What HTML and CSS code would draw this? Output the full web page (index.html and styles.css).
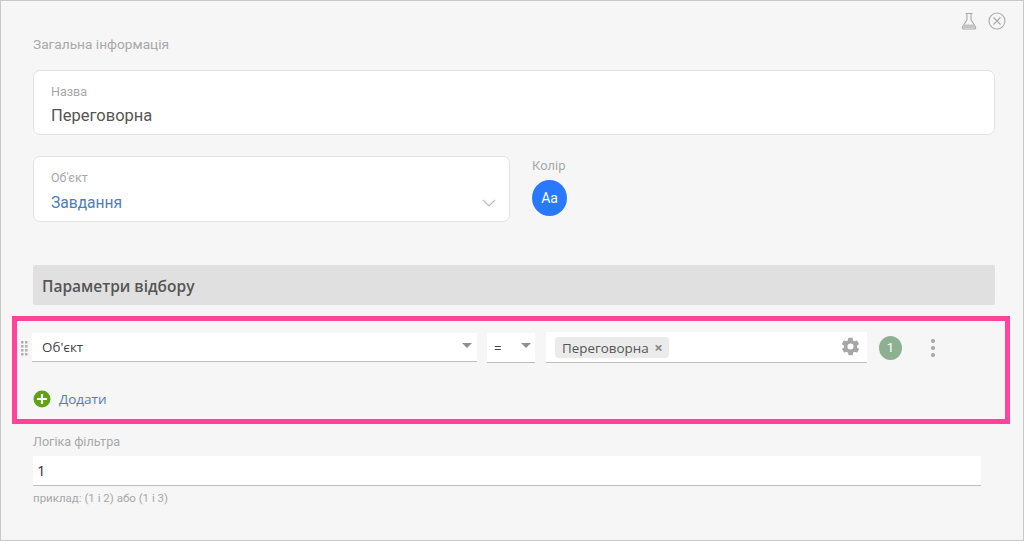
FILE: index.html
```html
<!DOCTYPE html>
<html lang="en">
<head>
  <meta charset="UTF-8" />
  <title>Параметри відбору</title>
  <link rel="stylesheet" href="styles.css">
</head>
<body>

<div class="page">
  <div class="top-icons">
    <svg class="icon-flask" width="16" height="18" viewBox="0 0 16 18">
      <path d="M4.500 1.500h7M6 1.500v6L1.500 15c-.5 1 .1 2 1.200 2h10.600c1.100 0 1.700-1 1.200-2L10 7.500v-6" fill="none" stroke="#a9a9a9" stroke-width="1.100"/>
      <path d="M3.500 12.500h9l1.500 3.500H2z" fill="#c4c4c4"/>
    </svg>
    <svg class="icon-close" width="18" height="18" viewBox="0 0 18 18">
      <circle cx="9" cy="9" r="8" fill="none" stroke="#a9a9a9" stroke-width="1.100"/>
      <path d="M5.500 5.500l7 7M12.500 5.500l-7 7" stroke="#a9a9a9" stroke-width="1.100"/>
    </svg>
  </div>

  <h3 class="general-title">Загальна інформація</h3>

  <div class="card card-name">
    <label>Назва</label>
    <div class="card-value">Переговорна</div>
  </div>

  <div class="object-row">
    <div class="card card-object">
      <label>Об'єкт</label>
      <div class="card-value link">Завдання</div>
      <svg class="chevron" width="14" height="8" viewBox="0 0 14 8">
        <path d="M1 1l6 6 6-6" fill="none" stroke="#bdbdbd" stroke-width="1.200"/>
      </svg>
    </div>
    <div class="color-box">
      <label>Колір</label>
      <div class="color-circle">Aa</div>
    </div>
  </div>

  <h2 class="section-title">Параметри відбору</h2>

  <!-- Highlighted filter block -->
  <section class="filter-box">
    <div class="filter-row">
      <svg class="drag" width="7" height="15" viewBox="0 0 7 15">
        <g fill="#b0b0b0">
          <rect x="0" y="0" width="2.500" height="2.500"/><rect x="4" y="0" width="2.500" height="2.500"/>
          <rect x="0" y="4" width="2.500" height="2.500"/><rect x="4" y="4" width="2.500" height="2.500"/>
          <rect x="0" y="8" width="2.500" height="2.500"/><rect x="4" y="8" width="2.500" height="2.500"/>
          <rect x="0" y="12" width="2.500" height="2.500"/><rect x="4" y="12" width="2.500" height="2.500"/>
        </g>
      </svg>
      <div class="field field-column">
        <span>Об'єкт</span>
        <i class="caret"></i>
      </div>
      <div class="field field-op">
        <span>=</span>
        <i class="caret"></i>
      </div>
      <div class="field field-value">
        <span class="tag">Переговорна <b>×</b></span>
        <svg class="gear" width="21" height="21" viewBox="0 0 24 24">
          <path fill="#a6a6a6" d="M19.400 13c.1-.3.1-.7.1-1s0-.7-.1-1l2.100-1.600c.2-.2.3-.4.1-.6l-2-3.500c-.1-.2-.4-.3-.6-.2l-2.500 1c-.5-.4-1.100-.7-1.700-1l-.4-2.600c0-.3-.2-.5-.5-.5h-4c-.3 0-.5.2-.5.4l-.4 2.700c-.6.2-1.100.6-1.700 1l-2.500-1c-.2-.1-.5 0-.6.2l-2 3.500c-.1.2-.1.5.1.6L4.600 11c-.1.3-.1.7-.1 1s0 .7.1 1l-2.100 1.600c-.2.2-.3.4-.1.6l2 3.500c.1.2.4.3.6.2l2.500-1c.5.4 1.100.7 1.700 1l.4 2.600c0 .3.2.5.5.5h4c.3 0 .5-.2.5-.4l.4-2.700c.6-.2 1.200-.6 1.700-1l2.500 1c.2.1.5 0 .6-.2l2-3.500c.1-.2.1-.5-.1-.6L19.400 13zM12 15.500a3.500 3.500 0 1 1 0-7 3.500 3.500 0 0 1 0 7z"/>
        </svg>
      </div>
      <div class="count">1</div>
      <div class="more"><i></i><i></i><i></i></div>
    </div>
    <div class="add-row">
      <svg width="18" height="18" viewBox="0 0 18 18">
        <circle cx="9" cy="9" r="8.500" fill="#5fa30e"/>
        <path d="M9 4v10M4 9h10" stroke="#fff" stroke-width="2.200"/>
      </svg>
      <a href="#">Додати</a>
    </div>
  </section>

  <div class="logic">
    <label>Логіка фільтра</label>
    <div class="logic-input">1</div>
    <p>приклад: (1 і 2) або (1 і 3)</p>
  </div>
</div>

</body>
</html>
```

FILE: styles.css
```css
/* Base */
html, body {
  margin: 0;
  padding: 0;
}
body {
  font-family: Roboto, "Open Sans", sans-serif;
  background: #f6f6f6;
}
label {
  display: block;
  color: #a8a8a8;
}
.page {
  position: relative;
  box-sizing: border-box;
  width: 1024px;
  height: 541px;
  overflow: hidden;
  border: 1px solid #c8c8c8;
  padding: 35px 28px 0 32px;
}

/* Top right icons */
.top-icons {
  position: absolute;
  top: 11px;
  right: 17px;
  display: flex;
  align-items: center;
  gap: 11px;
}
.top-icons svg {
  display: block;
}

/* General info */
.general-title {
  margin: 0 0 18px;
  font-size: 13.7px;
  line-height: 16px;
  font-weight: 400;
  color: #a8a8a8;
}
.card {
  position: relative;
  box-sizing: border-box;
  background: #fff;
  border: 1px solid #e2e2e2;
  border-radius: 7px;
  padding: 13px 17px 0;
}
.card label {
  font-size: 12.5px;
  line-height: 15px;
}
.card-value {
  margin-top: 7px;
  font-size: 16.5px;
  line-height: 20px;
  color: #555;
}
.card-value.link {
  margin-top: 8px;
  font-size: 15.6px;
  color: #4f7cc0;
}
.card-name {
  width: 962px;
  height: 65px;
  margin-bottom: 21px;
}
.object-row {
  display: flex;
  gap: 22px;
  margin-bottom: 43px;
}
.card-object {
  width: 477px;
  height: 66px;
}
.chevron {
  position: absolute;
  right: 13px;
  bottom: 14px;
}
.color-box label {
  margin-top: 1px;
  margin-bottom: 5px;
  font-size: 13px;
  line-height: 18px;
  color: #aaa;
}
.color-circle {
  width: 35px;
  height: 36px;
  border-radius: 50%;
  background: #2979ff;
  color: #fff;
  font-size: 14px;
  line-height: 36px;
  text-align: center;
}

/* Filter params */
.section-title {
  box-sizing: border-box;
  width: 962px;
  height: 40px;
  margin: 0 0 11px;
  padding-left: 9px;
  background: #e0e0e0;
  border-radius: 2px;
  font-family: "Open Sans", sans-serif;
  font-size: 15.5px;
  font-weight: 600;
  line-height: 42px;
  color: #555;
}
.filter-box {
  box-sizing: border-box;
  width: 998px;
  height: 108px;
  margin-left: -21px;
  border: 5px solid #ff4499;
  padding: 11px 0 0 4px;
}
.filter-row {
  display: flex;
  align-items: center;
  height: 32px;
}
.drag {
  flex-shrink: 0;
  margin-right: 4px;
}
.field {
  position: relative;
  box-sizing: border-box;
  display: flex;
  align-items: center;
  align-self: flex-start;
  background: #fff;
  border-bottom: 1px solid #bdbdbd;
  font-family: "Open Sans", sans-serif;
  font-size: 13.4px;
  color: #444;
}
.field-column {
  width: 445px;
  height: 29px;
  padding-left: 10px;
  margin: 1px 10px 0 0;
}
.field-op {
  width: 48px;
  height: 30px;
  padding-left: 7px;
  margin: 1px 11px 0 0;
}
.field-value {
  width: 321px;
  height: 31px;
  padding-left: 9px;
  margin-right: 12px;
}
.caret {
  position: absolute;
  top: 10px;
  right: 5px;
  width: 0;
  height: 0;
  border-left: 5px solid transparent;
  border-right: 5px solid transparent;
  border-top: 5px solid #8f8f8f;
}
.field-op .caret {
  right: 4px;
}
.tag {
  height: 21px;
  padding: 0 6px 0 7px;
  background: #ebebeb;
  border-radius: 4px;
  line-height: 21px;
  color: #555;
}
.tag b {
  margin-left: 2px;
  font-size: 15px;
  color: #888;
}
.gear {
  position: absolute;
  top: 4px;
  right: 6px;
}
.count {
  width: 23px;
  height: 24px;
  margin-right: 29px;
  border-radius: 50%;
  background: #8db092;
  color: #fff;
  font-size: 13px;
  line-height: 24px;
  text-align: center;
}
.more {
  display: flex;
  flex-direction: column;
  gap: 3px;
}
.more i {
  display: block;
  width: 4px;
  height: 4px;
  border-radius: 50%;
  background: #a6a6a6;
}
.add-row {
  display: flex;
  align-items: center;
  gap: 8px;
  margin-top: 26px;
  margin-left: 12px;
  height: 18px;
}
.add-row svg {
  display: block;
}
.add-row a {
  font-family: "Open Sans", sans-serif;
  font-size: 13.5px;
  color: #4f7cc0;
  text-decoration: none;
}

/* Logic */
.logic {
  margin-top: 10px;
}
.logic label {
  font-size: 12.6px;
  line-height: 16px;
}
.logic-input {
  box-sizing: border-box;
  width: 948px;
  height: 30px;
  margin-top: 6px;
  padding-left: 4px;
  background: #fff;
  border-bottom: 1px solid #bdbdbd;
  font-family: "Open Sans", sans-serif;
  font-size: 15px;
  line-height: 29px;
  color: #333;
}
.logic p {
  margin: 6px 0 0;
  font-size: 11.5px;
  line-height: 13px;
  color: #a8a8a8;
}
```
